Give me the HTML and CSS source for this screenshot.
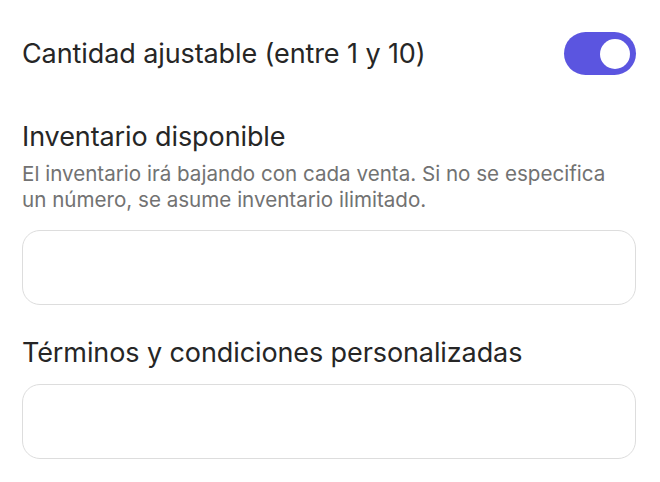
FILE: index.html
```html
<!DOCTYPE html>
<html lang="es">
<head>
<meta charset="utf-8">
<link rel="stylesheet" href="styles.css">
</head>
<body>
<main class="form">
  <div class="toggle-row">
    <span class="label">Cantidad ajustable (entre 1 y 10)</span>
    <span class="switch on"><span class="knob"></span></span>
  </div>
  <section class="field first">
    <h2 class="label">Inventario disponible</h2>
    <p class="hint">El inventario irá bajando con cada venta. Si no se especifica un número, se asume inventario ilimitado.</p>
    <div class="input"></div>
  </section>
  <section class="field">
    <h2 class="label">Términos y condiciones personalizadas</h2>
    <div class="input"></div>
  </section>
</main>
</body>
</html>
```
FILE: styles.css
```css
html, body {
  margin: 0;
  padding: 0;
  background: #ffffff;
}
body {
  font-family: Inter, "Noto Sans", "Liberation Sans", sans-serif;
  color: #262626;
}
.form {
  padding: 32px 24px 0 22px;
}
.toggle-row {
  display: flex;
  align-items: center;
  justify-content: space-between;
  height: 43px;
}
.label {
  font-size: 27px;
  font-weight: 400;
  line-height: 32px;
  margin: 0;
  letter-spacing: -0.1px;
  color: #262626;
}
.switch {
  width: 72px;
  height: 43px;
  border-radius: 22px;
  background: #5b55e0;
  display: flex;
  align-items: center;
  justify-content: flex-end;
  padding: 0 6px;
  box-sizing: border-box;
}
.knob {
  width: 30px;
  height: 30px;
  border-radius: 50%;
  background: #ffffff;
}
.field {
  margin-top: 32px;
}
.field.first {
  margin-top: 46px;
}
.field.first .input {
  margin-top: 17px;
}
.hint {
  margin: 8px 12px 0 0;
  font-size: 20.6px;
  line-height: 26px;
  color: #727272;
  letter-spacing: 0;
}
.input {
  margin-top: 15px;
  height: 75px;
  border: 1.5px solid #dddddd;
  border-radius: 18px;
  box-sizing: border-box;
}
```
